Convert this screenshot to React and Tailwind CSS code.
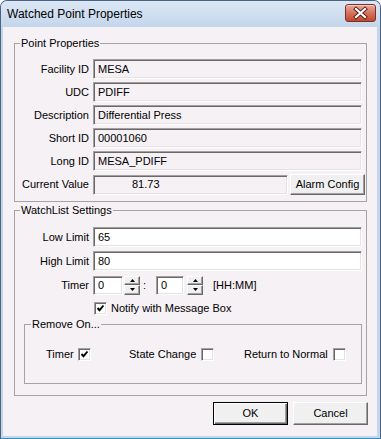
import React from "react";

// classic win32 bevels
const sunken =
  "border border-t-[#a0a0a0] border-l-[#a0a0a0] border-r-white border-b-white shadow-[inset_1px_1px_0_#696969,inset_-1px_-1px_0_#e3e3e3]";
const raised =
  "border border-t-white border-l-white border-r-[#696969] border-b-[#696969] shadow-[inset_-1px_-1px_0_#a0a0a0,inset_1px_1px_0_#f0f0f0] bg-[#f0f0f0]";

const Field = ({ label, value, white }) => (
  <div className="flex items-center h-[20px]">
    <span className="w-[74px] shrink-0 text-right">{label}</span>
    <input
      readOnly={!white}
      defaultValue={value}
      className={`ml-[4px] h-[20px] flex-1 min-w-0 pl-[4px] outline-none ${sunken} ${
        white ? "bg-white" : "bg-transparent"
      }`}
    />
  </div>
);

const Arrow = ({ down }) => (
  <svg width="5" height="3" viewBox="0 0 5 3">
    <path d={down ? "M0 0h5L2.5 3z" : "M2.5 0L5 3H0z"} fill="#000" />
  </svg>
);

const Spin = ({ className = "" }) => (
  <div className={`flex flex-col w-[16px] h-[19px] shrink-0 ${className}`}>
    <button className={`h-[9.5px] flex items-center justify-center ${raised}`}>
      <Arrow />
    </button>
    <button className={`h-[9.5px] flex items-center justify-center ${raised}`}>
      <Arrow down />
    </button>
  </div>
);

const Check = ({ checked }) => (
  <div className={`w-[13px] h-[13px] shrink-0 bg-white flex items-center justify-center ${sunken}`}>
    {checked && (
      <svg width="9" height="9" viewBox="0 0 9 9">
        <path d="M1.5 4l2 2.2L7.5 1.5" fill="none" stroke="#000" strokeWidth="1.9" />
      </svg>
    )}
  </div>
);

export default function App() {
  return (
    <div className="w-[381px] h-[439px] flex flex-col border border-[#4a6382] border-b-[#3190c2] rounded-t-[7px] bg-[#c4d6ec] text-[11px] leading-[13px] text-black font-['Liberation_Sans',Arial,sans-serif] overflow-hidden">
      {/* title bar */}
      <div className="h-[26px] shrink-0 flex items-start justify-between bg-gradient-to-b from-[#dce7f4] to-[#c4d6ec]">
        <span className="ml-[6px] mt-[6px] text-[12px] leading-[15px]">Watched Point Properties</span>
        <button className="mt-[3px] mr-[4px] w-[31px] h-[18px] rounded-[3px] border border-[#7c3026] bg-gradient-to-b from-[#e9a99b] via-[#d5735f] to-[#c2462e] flex items-center justify-center shadow-[inset_0_1px_0_#f4cfc6]">
          <svg width="31" height="18" viewBox="0 0 31 18" className="-m-px">
            <path d="M11 5l9 8M20 5l-9 8" stroke="#5a1c14" strokeWidth="4" strokeLinecap="square" />
            <path d="M11 5l9 8M20 5l-9 8" stroke="#fff" strokeWidth="2.2" strokeLinecap="square" />
          </svg>
        </button>
      </div>

      {/* client area */}
      <div className="flex-1 ml-[2px] mr-[3px] mb-[2px] bg-[#f5f1f5] flex flex-col pl-[11px] pr-[10px]">
        <fieldset className="mt-[10px] border border-[#a4a4a4] pt-[9px] pb-[6px] pr-[4px]">
          <legend className="ml-[5px] px-[1px]">Point Properties</legend>
          <div className="flex flex-col gap-[3px]">
            <Field label="Facility ID" value="MESA" />
            <Field label="UDC" value="PDIFF" />
            <Field label="Description" value="Differential Press" />
            <Field label="Short ID" value="00001060" />
            <Field label="Long ID" value="MESA_PDIFF" />
            <div className="flex items-center">
              <span className="w-[74px] shrink-0 text-right">Current Value</span>
              <div className={`ml-[4px] h-[20px] w-[195px] shrink-0 pl-[38px] flex items-center ${sunken}`}>
                81.73
              </div>
              <button className={`ml-[2px] -mr-[3px] w-[75px] h-[21px] shrink-0 ${raised}`}>
                Alarm Config
              </button>
            </div>
          </div>
        </fieldset>

        <fieldset className="mt-[2px] border border-[#a4a4a4] pt-[10px] pb-[11px] pr-[4px]">
          <legend className="ml-[5px] px-[1px]">WatchList Settings</legend>
          <div className="flex flex-col gap-[4px]">
            <Field label="Low Limit" value="65" white />
            <Field label="High Limit" value="80" white />
            <div className="flex items-center h-[20px]">
              <span className="w-[74px] shrink-0 text-right">Timer</span>
              <input
                defaultValue="0"
                className={`ml-[4px] h-[19px] w-[30px] shrink-0 pl-[4px] bg-white outline-none ${sunken}`}
              />
              <Spin className="ml-[1px]" />
              <span className="ml-[3px] mr-[10px]">:</span>
              <input
                defaultValue="0"
                className={`h-[19px] w-[28px] shrink-0 pl-[4px] bg-white outline-none ${sunken}`}
              />
              <Spin className="ml-[3px]" />
              <span className="ml-[10px]">[HH:MM]</span>
            </div>
          </div>
          <div className="mt-[7px] ml-[79px] flex items-center gap-[4px] h-[13px]">
            <Check checked />
            <span>Notify with Message Box</span>
          </div>

          <fieldset className="mt-[3px] ml-[9px] border border-[#a4a4a4] pt-[17px] pb-[22px]">
            <legend className="ml-[6px] px-[1px]">Remove On...</legend>
            <div className="flex items-center pl-[21px] h-[13px]">
              <div className="w-[83px] flex items-center gap-[4px]">
                <span>Timer</span>
                <Check checked />
              </div>
              <div className="w-[115px] flex items-center gap-[5px]">
                <span>State Change</span>
                <Check />
              </div>
              <div className="flex items-center gap-[5px]">
                <span>Return to Normal</span>
                <Check />
              </div>
            </div>
          </fieldset>
        </fieldset>

        <div className="mt-[6px] flex justify-end gap-[5px] -mr-[1px]">
          <button className="w-[75px] h-[23px] bg-[#f0f0f0] border border-black shadow-[inset_1px_1px_0_#fff,inset_-1px_-1px_0_#696969,inset_-2px_-2px_0_#a0a0a0]">
            OK
          </button>
          <button className={`w-[75px] h-[23px] ${raised}`}>Cancel</button>
        </div>
      </div>
    </div>
  );
}
